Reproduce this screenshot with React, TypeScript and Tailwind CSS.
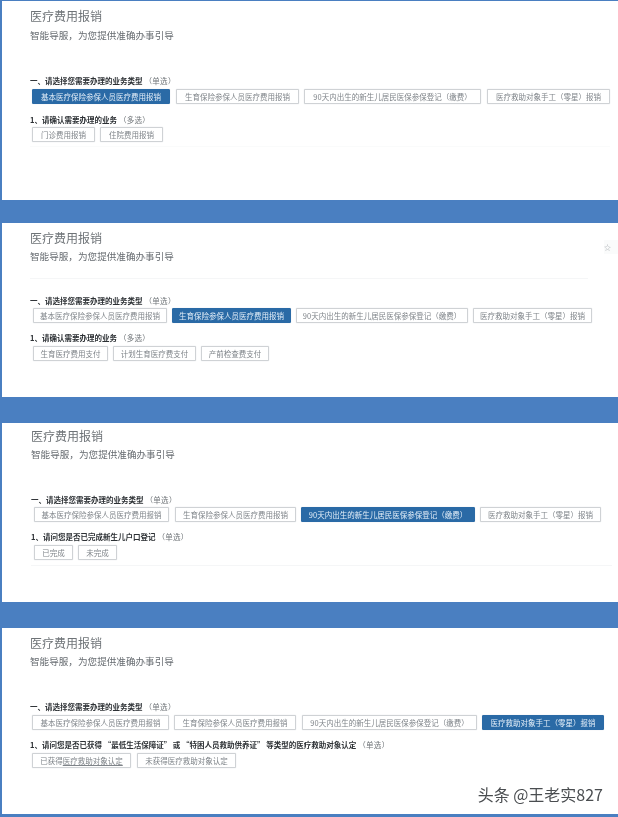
import React from 'react';

const Title = ({ className }: { className: string }) => (
  <h1 className={`h-[16px] text-[12px] leading-[16px] text-[#6e7377] ${className}`}>医疗费用报销</h1>
);

const Sub = ({ className }: { className: string }) => (
  <p className={`h-[14px] text-[9.6px] leading-[14px] text-[#666b70] ${className}`}>智能导服，为您提供准确办事引导</p>
);

const Heading = ({ text, note, className }: { text: string; note: string; className: string }) => (
  <div className={`h-[12px] whitespace-nowrap text-[7.5px] leading-[12px] ${className}`}>
    <span className="font-bold text-[#2c3034]">{text}</span>
    <span className="ml-[2px] tracking-[0.3px] text-[#6f7478]">{note}</span>
  </div>
);

const Choice = ({
  className,
  active,
  children,
}: {
  className: string;
  active?: boolean;
  children: React.ReactNode;
}) => (
  <div
    className={`flex h-[15px] shrink-0 items-center justify-center whitespace-nowrap rounded-[1px] border text-[7.5px] shadow-[0_0_1px_#c9ccd0] ${
      active
        ? 'border-[#2a6aa6] bg-[#2a6aa6] text-[#e3eef8]'
        : 'border-[#cfd2d5] bg-white text-[#7f8489]'
    } ${className}`}
  >
    {children}
  </div>
);

const TYPE_HEADING = '一、请选择您需要办理的业务类型';

export default function App() {
  return (
    <div
      className="h-[817px] w-[618px] overflow-hidden bg-[#4a7fc1] pt-px blur-[0.45px]"
      style={{ fontFamily: '"Noto Sans CJK SC", "Noto Sans", sans-serif' }}
    >
      {/* Panel 1 */}
      <section className="ml-[2px] h-[199px] bg-white pl-[28px] pt-[7px]">
        <Title className="" />
        <Sub className="mt-[4px]" />
        <Heading text={TYPE_HEADING} note="（单选）" className="mt-[33px]" />
        <div className="ml-[2px] mt-[2px] flex">
          <Choice active className="w-[138px]">基本医疗保险参保人员医疗费用报销</Choice>
          <Choice className="ml-[6px] w-[123px]">生育保险参保人员医疗费用报销</Choice>
          <Choice className="ml-[5px] w-[177px]">90天内出生的新生儿居民医保参保登记（缴费）</Choice>
          <Choice className="ml-[6px] w-[123px]">医疗救助对象手工（零星）报销</Choice>
        </div>
        <Heading text="1、请确认需要办理的业务" note="（多选）" className="mt-[10px]" />
        <div className="ml-[2px] mt-[1px] flex">
          <Choice className="w-[63px]">门诊费用报销</Choice>
          <Choice className="ml-[5px] w-[63px]">住院费用报销</Choice>
        </div>
        <div className="mr-[8px] mt-[4px] h-px bg-[#fafbfb]" />
      </section>

      {/* Panel 2 */}
      <section className="relative ml-[2px] mt-[23px] h-[174px] bg-white pl-[28px] pt-[7px]">
        <Title className="" />
        <Sub className="mt-[3px]" />
        <div className="mr-[30px] mt-[15px] h-px bg-[#f5f6f7]" />
        <Heading text={TYPE_HEADING} note="（单选）" className="mt-[16px]" />
        <div className="ml-[3px] mt-px flex">
          <Choice className="w-[134px]">基本医疗保险参保人员医疗费用报销</Choice>
          <Choice active className="ml-[5px] w-[119px]">生育保险参保人员医疗费用报销</Choice>
          <Choice className="ml-[5px] w-[172px]">90天内出生的新生儿居民医保参保登记（缴费）</Choice>
          <Choice className="ml-[5px] w-[119px]">医疗救助对象手工（零星）报销</Choice>
        </div>
        <Heading text="1、请确认需要办理的业务" note="（多选）" className="mt-[9px]" />
        <div className="ml-[3px] mt-[2px] flex">
          <Choice className="w-[75px]">生育医疗费用支付</Choice>
          <Choice className="ml-[5px] w-[83px]">计划生育医疗费支付</Choice>
          <Choice className="ml-[5px] w-[68px]">产前检查费支付</Choice>
        </div>
        <div className="absolute right-0 top-[17px] flex h-[14px] w-[14px] items-center bg-[#fafbfb] text-[7px] text-[#a8adb2]">
          ☆
        </div>
      </section>

      {/* Panel 3 */}
      <section className="ml-[2px] mt-[26px] h-[179px] bg-white pl-[29px] pt-[5px]">
        <Title className="" />
        <Sub className="mt-[3px]" />
        <Heading text={TYPE_HEADING} note="（单选）" className="mt-[33px]" />
        <div className="ml-[3px] mt-px flex">
          <Choice className="w-[135px]">基本医疗保险参保人员医疗费用报销</Choice>
          <Choice className="ml-[6px] w-[121px]">生育保险参保人员医疗费用报销</Choice>
          <Choice active className="ml-[5px] w-[174px]">90天内出生的新生儿居民医保参保登记（缴费）</Choice>
          <Choice className="ml-[5px] w-[121px]">医疗救助对象手工（零星）报销</Choice>
        </div>
        <Heading text="1、请问您是否已完成新生儿户口登记" note="（单选）" className="mt-[9px]" />
        <div className="ml-[3px] mt-[2px] flex">
          <Choice className="w-[39px]">已完成</Choice>
          <Choice className="ml-[5px] w-[39px]">未完成</Choice>
        </div>
        <div className="mr-[6px] mt-[5px] h-px bg-[#f5f6f7]" />
      </section>

      {/* Panel 4 */}
      <section className="relative ml-[2px] mt-[26px] h-[186px] bg-white pl-[28px] pt-[7px]">
        <Title className="" />
        <Sub className="mt-[3px]" />
        <Heading text={TYPE_HEADING} note="（单选）" className="mt-[33px]" />
        <div className="ml-[2px] mt-[2px] flex">
          <Choice className="w-[137px]">基本医疗保险参保人员医疗费用报销</Choice>
          <Choice className="ml-[5px] w-[122px]">生育保险参保人员医疗费用报销</Choice>
          <Choice className="ml-[6px] w-[175px]">90天内出生的新生儿居民医保参保登记（缴费）</Choice>
          <Choice active className="ml-[5px] w-[122px]">医疗救助对象手工（零星）报销</Choice>
        </div>
        <Heading
          text="1、请问您是否已获得 “最低生活保障证” 或 “特困人员救助供养证” 等类型的医疗救助对象认定"
          note="（单选）"
          className="mt-[9px]"
        />
        <div className="ml-[2px] mt-[2px] flex">
          <Choice className="w-[99px]">
            已获得<span className="underline">医疗救助对象认定</span>
          </Choice>
          <Choice className="ml-[6px] w-[99px]">未获得医疗救助对象认定</Choice>
        </div>
        <div className="absolute right-[15px] top-[156px] whitespace-nowrap text-[16px] leading-[20px] text-[#4a4d50] [text-shadow:0_0_2px_#fff]">
          头条 @王老实827
        </div>
      </section>
    </div>
  );
}
